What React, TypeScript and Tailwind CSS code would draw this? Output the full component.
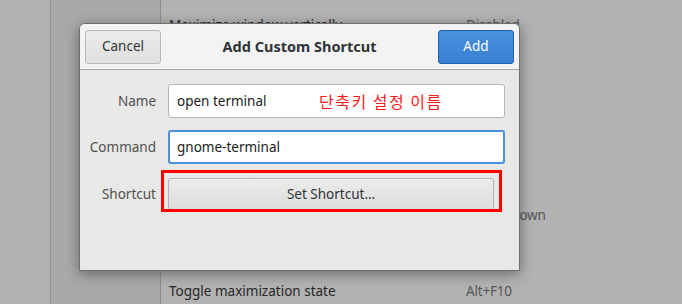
import React from "react";

const rows = [
  { name: "Maximize window vertically", key: "Disabled" },
  { name: "", key: "" },
  { name: "", key: "" },
  { name: "", key: "" },
  { name: "", key: "" },
  { name: "", key: "Super+Down" },
  { name: "", key: "" },
  { name: "Toggle maximization state", key: "Alt+F10" },
];

export default function App() {
  return (
    <div
      className="relative w-[682px] h-[304px] overflow-hidden flex"
      style={{ fontFamily: '"Noto Sans", "DejaVu Sans", sans-serif' }}
    >
      <div className="w-[51px] h-full bg-[#b1b1b1] border-r border-[#8e8e8e]" />
      <div className="w-[110px] h-full bg-[#a9a9a9] border-r border-[#8e8e8e]" />
      <div className="flex-1 h-full bg-[#b2b2b2] flex flex-col pt-[6px]">
        {rows.map((r, i) => (
          <div key={i} className="h-[38px] shrink-0 flex items-center text-[13.5px]">
            <div className="w-[305px] pl-[8px] text-[#262626]">{r.name}</div>
            <div className="text-[#555555] tracking-[-0.2px]">{r.key}</div>
          </div>
        ))}
      </div>

      <div className="absolute left-[79px] top-[23px] w-[441px] h-[248px] rounded-t-[6px] border border-[#6f6f6f] bg-[#e8e8e7] shadow-[0_3px_14px_rgba(0,0,0,0.4)] flex flex-col overflow-hidden">
        <div className="h-[46px] bg-[#f3f3f3] border-b border-[#a9a9a7] flex items-center justify-between px-[5px]">
          <button className="w-[76px] h-[34px] rounded-[3px] border border-[#b9b9b6] bg-gradient-to-b from-[#ececeb] to-[#e0e0df] text-[13.5px] text-[#2e3436]">
            Cancel
          </button>
          <div className="text-[14.5px] font-bold text-[#2e3436]">Add Custom Shortcut</div>
          <button className="w-[76px] h-[34px] rounded-[3px] border border-[#1f5ea8] bg-gradient-to-b from-[#4a91dc] to-[#3680d4] text-[13.5px] text-white">
            Add
          </button>
        </div>
        <div className="relative flex flex-col pt-[14px] pr-[14px] gap-[12px]">
          <div className="flex items-center gap-[12px]">
            <div className="w-[76px] text-right text-[13.5px] text-[#505050]">Name</div>
            <div className="flex-1 h-[34px] rounded-[3px] border border-[#b6b6b3] bg-white flex items-center px-[8px] text-[13.5px] text-[#202020]">
              <span className="w-[142px]">open terminal</span>
              <span
                className="text-[#ff1a1a] text-[16px] tracking-[1.5px]"
                style={{ fontFamily: '"Noto Sans CJK KR", sans-serif' }}
              >
                단축키 설정 이름
              </span>
            </div>
          </div>
          <div className="flex items-center gap-[12px]">
            <div className="w-[76px] text-right text-[13.5px] text-[#505050]">Command</div>
            <div className="flex-1 h-[34px] rounded-[3px] border-2 border-[#4a90d9] bg-white flex items-center px-[7px] text-[13.5px] text-[#202020]">
              gnome-terminal
            </div>
          </div>
          <div className="flex items-center gap-[12px] pt-[2px]">
            <div className="w-[76px] text-right text-[13.5px] text-[#505050]">Shortcut</div>
            <div className="w-[326px] h-[33px] rounded-[3px] border border-[#b3b3b0] bg-gradient-to-b from-[#ececeb] to-[#dcdcdb] flex items-center justify-center text-[13.5px] text-[#2e3436]">
              Set Shortcut…
            </div>
          </div>
          <div className="absolute left-[81px] top-[100px] w-[341px] h-[42px] border-[3px] border-[#ff0000]" />
        </div>
      </div>
    </div>
  );
}
